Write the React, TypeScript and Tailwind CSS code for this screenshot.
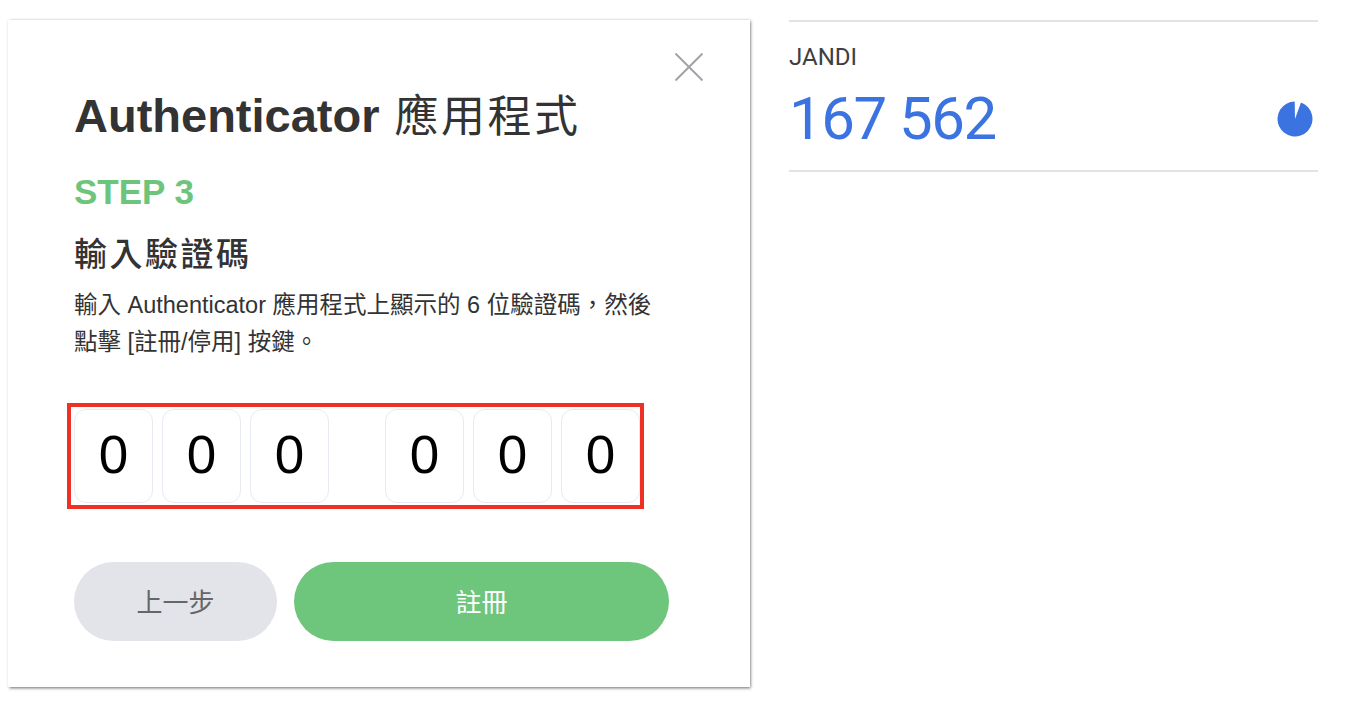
import React from "react";

const cjk = '"Liberation Sans", "Noto Sans CJK TC", sans-serif';

const DigitBox = ({ value }: { value: string }) => (
  <div className="flex h-[94px] w-[79px] items-center justify-center rounded-[12px] border border-[#e8eaf2] bg-white pb-[3px] text-[53px] leading-none text-black">
    {value}
  </div>
);

export default function App() {
  return (
    <div
      className="flex h-[702px] w-[1358px] items-start overflow-hidden bg-white pl-2 pt-5"
      style={{ fontFamily: cjk }}
    >
      {/* Dialog */}
      <div className="relative h-[667px] w-[742px] shrink-0 bg-white pl-[66px] pt-[68px] shadow-[0.5px_1px_3px_rgba(0,0,0,0.6)]">
        <button className="absolute left-[667px] top-[33px] text-[#a0a4a8]" aria-label="close">
          <svg width="28" height="28" viewBox="0 0 28 28" fill="none" stroke="currentColor" strokeWidth="2" className="block">
            <path d="M0.5 0.5L27.5 27.5M27.5 0.5L0.5 27.5" />
          </svg>
        </button>

        <h1 className="h-14 text-[47px] font-bold leading-[56px] text-[#333333]">
          Authenticator <span className="ml-[2px] text-[44px] font-normal tracking-[2.5px]">應用程式</span>
        </h1>
        <div className="mt-7 h-10 text-[35px] font-bold leading-10 text-[#6cc57b]">STEP 3</div>
        <h2 className="mt-[21px] h-11 text-[33px] font-medium leading-[44px] tracking-[2.5px] text-[#333333]">輸入驗證碼</h2>
        <p className="mt-2.5 w-[600px] text-[23.5px] leading-[37px] text-[#333333]">
          輸入 Authenticator 應用程式上顯示的 6 位驗證碼{"\uFF0C"}然後
          <br />
          點擊 [註冊/停用] 按鍵。
        </p>

        <div className="-ml-[7px] mt-[42px] flex h-[106px] w-[577px] gap-[9px] border-4 border-[#ee3124] pl-[3px] pt-[2px]">
          <DigitBox value="0" />
          <DigitBox value="0" />
          <DigitBox value="0" />
          <div className="w-[38px]" />
          <DigitBox value="0" />
          <DigitBox value="0" />
          <DigitBox value="0" />
        </div>

        <div className="mt-[53px] flex gap-[17px]">
          <button className="h-[79px] w-[203px] rounded-full bg-[#e3e4ea] pt-[3px] text-[26px] text-[#666666]">上一步</button>
          <button className="h-[79px] w-[375px] rounded-full bg-[#6ec57c] pt-[3px] text-[26px] text-white">註冊</button>
        </div>
      </div>

      {/* Authenticator entry */}
      <div
        className="ml-[39px] h-[152px] w-[529px] border-y-2 border-[#e2e3e8]"
        style={{ fontFamily: 'Roboto, "Noto Sans", sans-serif' }}
      >
        <div className="mt-[23px] text-[24px] leading-6 text-[#3c4043]">JANDI</div>
        <div className="mt-[15px] flex items-center justify-between pr-[5px]">
          <span className="text-[60px] leading-[70px] tracking-[-1.5px] text-[#3b73e0]">167 562</span>
          <svg width="36" height="36" viewBox="0 0 36 36" className="block">
            <path d="M18 18L23.99 1.56A17.5 17.5 0 1 1 17.7 0.5Z" fill="#3b73e0" />
          </svg>
        </div>
      </div>
    </div>
  );
}
